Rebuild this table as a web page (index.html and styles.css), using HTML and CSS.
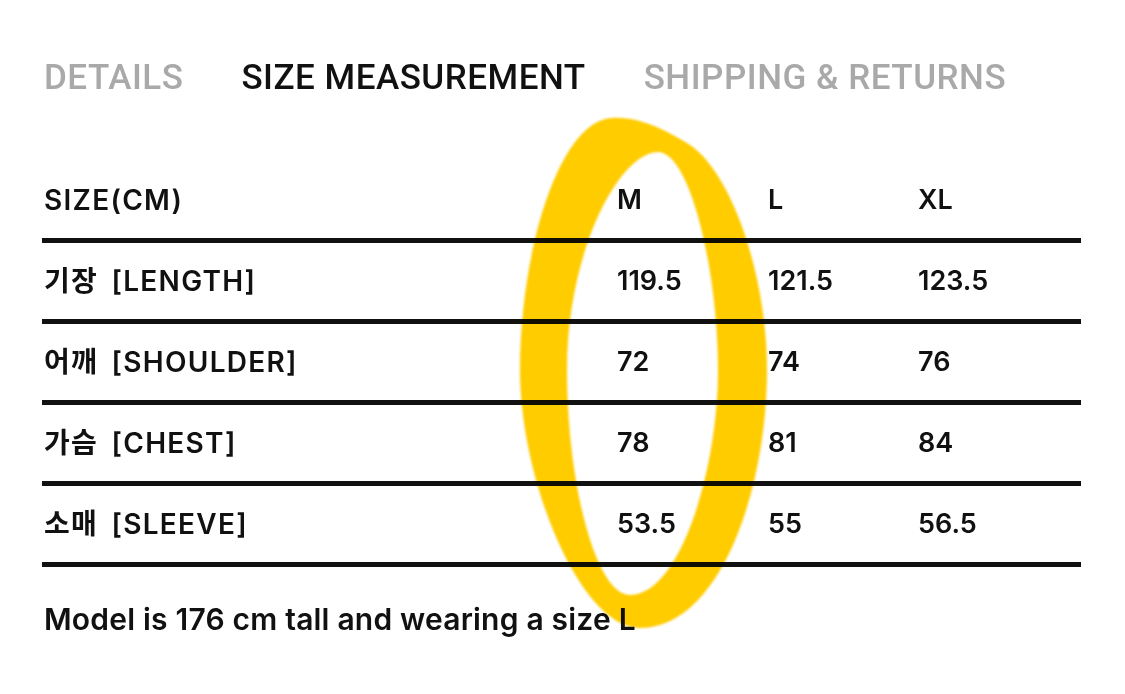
FILE: index.html
```html
<!DOCTYPE html>
<html lang="ko">
<head>
<meta charset="utf-8">
<title>Size Measurement</title>
<link rel="stylesheet" href="styles.css">
</head>
<body>
<div class="page">
  <nav class="tabs">
    <span class="tab">DETAILS</span>
    <span class="tab active">SIZE MEASUREMENT</span>
    <span class="tab">SHIPPING &amp; RETURNS</span>
  </nav>

  <div class="table">
    <div class="row head">
      <div class="cell label">SIZE(CM)</div>
      <div class="cell">M</div>
      <div class="cell">L</div>
      <div class="cell">XL</div>
    </div>
    <div class="row">
      <div class="cell label">기장 [LENGTH]</div>
      <div class="cell">119.5</div>
      <div class="cell">121.5</div>
      <div class="cell">123.5</div>
    </div>
    <div class="row">
      <div class="cell label">어깨 [SHOULDER]</div>
      <div class="cell">72</div>
      <div class="cell">74</div>
      <div class="cell">76</div>
    </div>
    <div class="row">
      <div class="cell label">가슴 [CHEST]</div>
      <div class="cell">78</div>
      <div class="cell">81</div>
      <div class="cell">84</div>
    </div>
    <div class="row">
      <div class="cell label">소매 [SLEEVE]</div>
      <div class="cell">53.5</div>
      <div class="cell">55</div>
      <div class="cell">56.5</div>
    </div>
  </div>

  <p class="note">Model is 176 cm tall and wearing a size L</p>

  <svg class="marker" width="1125" height="694" viewBox="0 0 1125 694" aria-hidden="true">
    <defs>
      <filter id="soft" x="-5%" y="-5%" width="110%" height="110%">
        <feGaussianBlur stdDeviation="0.9"/>
      </filter>
    </defs>
    <path fill="#ffcc00" fill-rule="evenodd" filter="url(#soft)"
          d="M 612 118 C 640 116, 670 132, 693 147 C 735 180, 767 280, 767 370 C 767 490, 720 628, 640 628 C 580 628, 520 480, 520 370 C 520 250, 560 120, 612 118 Z
             M 658 152 C 690 152, 718 270, 718 370 C 718 470, 680 595, 630 595 C 595 595, 567 480, 567 370 C 567 250, 620 152, 658 152 Z"/>
  </svg>
</div>
</body>
</html>
```

FILE: styles.css
```css
* { box-sizing: border-box; }

html, body {
  margin: 0;
  padding: 0;
  background: #ffffff;
}

body {
  font-family: Inter, "Noto Sans CJK KR", "Liberation Sans", sans-serif;
  color: #111111;
}

.page {
  position: relative;
  width: 1125px;
  height: 694px;
  padding: 58px 44px 0 42px;
}

.tabs {
  display: flex;
  gap: 58px;
  padding-left: 2px;
  height: 40px;
  align-items: center;
}

.tab {
  font-family: Roboto, "Liberation Sans", sans-serif;
  font-size: 35px;
  font-weight: 500;
  letter-spacing: 0.5px;
  line-height: 40px;
  color: #a9a9a9;
  white-space: nowrap;
}

.tab.active {
  color: #111111;
}

.table {
  margin-top: 64px;
  width: 1039px;
}

.row {
  display: grid;
  grid-template-columns: 575px 151px 150px 1fr;
  align-items: center;
  height: 81px;
  border-bottom: 5px solid #111111;
}

.cell {
  font-size: 27px;
  font-weight: 600;
  line-height: 32px;
  padding-left: 0;
  white-space: nowrap;
}

.cell.label {
  padding-left: 2px;
  font-size: 28px;
  letter-spacing: 1.3px;
  word-spacing: 5px;
}

.note {
  margin: 35px 0 0 2px;
  font-size: 30px;
  font-weight: 600;
  letter-spacing: 0.2px;
  line-height: 34px;
}

.marker {
  position: absolute;
  left: 0;
  top: 0;
  mix-blend-mode: multiply;
  pointer-events: none;
}
```
